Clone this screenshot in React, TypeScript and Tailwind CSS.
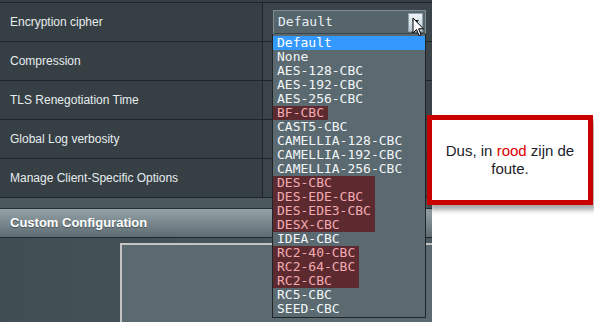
import React from "react";

type Cipher = { name: string; bad?: boolean };

const ciphers: Cipher[] = [
  { name: "Default" },
  { name: "None" },
  { name: "AES-128-CBC" },
  { name: "AES-192-CBC" },
  { name: "AES-256-CBC" },
  { name: "BF-CBC", bad: true },
  { name: "CAST5-CBC" },
  { name: "CAMELLIA-128-CBC" },
  { name: "CAMELLIA-192-CBC" },
  { name: "CAMELLIA-256-CBC" },
  { name: "DES-CBC", bad: true },
  { name: "DES-EDE-CBC", bad: true },
  { name: "DES-EDE3-CBC", bad: true },
  { name: "DESX-CBC", bad: true },
  { name: "IDEA-CBC" },
  { name: "RC2-40-CBC", bad: true },
  { name: "RC2-64-CBC", bad: true },
  { name: "RC2-CBC", bad: true },
  { name: "RC5-CBC" },
  { name: "SEED-CBC" },
];

const labels = [
  "Encryption cipher",
  "Compression",
  "TLS Renegotiation Time",
  "Global Log verbosity",
  "Manage Client-Specific Options",
];

// groepjes van opeenvolgende "foute" ciphers krijgen samen één rood blok
const groupCiphers = (list: Cipher[]) => {
  const groups: { bad: boolean; items: Cipher[] }[] = [];
  list.forEach((c) => {
    const last = groups[groups.length - 1];
    if (last && last.bad && c.bad) last.items.push(c);
    else groups.push({ bad: !!c.bad, items: [c] });
  });
  return groups;
};

const SelectBox = () => (
  <div className="ml-[10px] mt-[7px] w-[153px] h-[24px] flex items-center justify-between bg-[#56656b] border border-[#7f8d92] border-b-[#3a4448]">
    <span className="pl-[4px] font-['DejaVu_Sans_Mono',monospace] text-[13px] text-[#e8f0f4]">Default</span>
    <span className="mr-[2px] w-[15px] h-[19px] flex items-start justify-center bg-linear-to-b from-[#eef4f8] to-[#bccbd4] border border-[#8fa3ae]">
      <svg width="7" height="5" viewBox="0 0 7 5" className="mt-[6px]">
        <path d="M0 0 L7 0 L3.5 4.5 Z" fill="#1a1a1a" />
      </svg>
    </span>
  </div>
);

const Row = ({ label, first }: { label: string; first?: boolean }) => (
  <div className="flex h-[39px] border-b border-[#1f2528]">
    <div className="w-[263px] shrink-0 flex items-center pl-[10px] border-r border-[#1f2528] bg-[#363f43] text-[12px] text-[#e6edf0]">
      {label}
    </div>
    <div className="flex-1 bg-[#3b4549]">{first && <SelectBox />}</div>
  </div>
);

const Dropdown = () => (
  <div className="absolute left-[272px] top-[34px] w-[154px] h-[284px] pt-[2px] bg-[#5a6a70] border-l border-r border-b border-[#202628] font-['DejaVu_Sans_Mono',monospace] text-[13px] leading-[14px]">
    {groupCiphers(ciphers).map((g, gi) => (
      <div key={gi} className={g.bad ? "w-fit pr-[4px] bg-[#5c2a2f] text-[#f3aab2]" : "text-[#f2f6f8]"}>
        {g.items.map((c) => (
          <div key={c.name} className={c.name === "Default" ? "h-[14px] pl-[4px] bg-[#3399ff] text-white" : "h-[14px] pl-[4px] whitespace-nowrap"}>
            {c.name}
          </div>
        ))}
      </div>
    ))}
  </div>
);

const Cursor = () => (
  <svg className="absolute left-[412px] top-[17px]" width="13" height="21" viewBox="0 0 13 21">
    <path d="M1 1 L1 16 L4.5 12.5 L7 18.5 L9 17.6 L6.6 11.8 L11.4 11.8 Z" fill="white" stroke="black" strokeWidth="1" strokeLinejoin="round" />
  </svg>
);

export default function App() {
  return (
    <div className="relative w-[594px] h-[322px] bg-white overflow-hidden font-['Liberation_Sans',Arial,sans-serif]">
      <div className="w-[432px] h-full flex flex-col">
        <div className="h-[3px] bg-[#363f43] border-b border-[#1f2528]" />
        {labels.map((l, i) => (
          <Row key={l} label={l} first={i === 0} />
        ))}
        <div className="h-[11px] bg-[#4b585d] border-b border-[#262d30]" />
        <div className="h-[29px] flex items-center pl-[10px] bg-linear-to-b from-[#95a3a8] to-[#5d6c72] border-b border-[#232a2d]">
          <span className="text-[13px] font-bold text-white [text-shadow:0_1px_1px_rgba(0,0,0,0.35)]">Custom Configuration</span>
        </div>
        <div className="flex-1 pt-[5px] pl-[120px] bg-linear-to-r from-[#404d52] to-[#4d5a5f]">
          <div className="w-full h-full bg-[#5a6a70] border-l-2 border-t-2 border-[#c4c4c4]" />
        </div>
      </div>

      <Dropdown />
      <Cursor />

      <div className="absolute left-[427px] top-[115px] w-[166px] h-[90px] flex items-center justify-center border-[5px] border-[#c80000] bg-white text-center text-[15px] leading-[18px] text-[#1c1c2a] shadow-[3px_5px_5px_rgba(0,0,0,0.35)]">
        <p>
          Dus, in <span className="text-[#e00000]">rood</span> zijn de
          <br />
          foute.
        </p>
      </div>
    </div>
  );
}
